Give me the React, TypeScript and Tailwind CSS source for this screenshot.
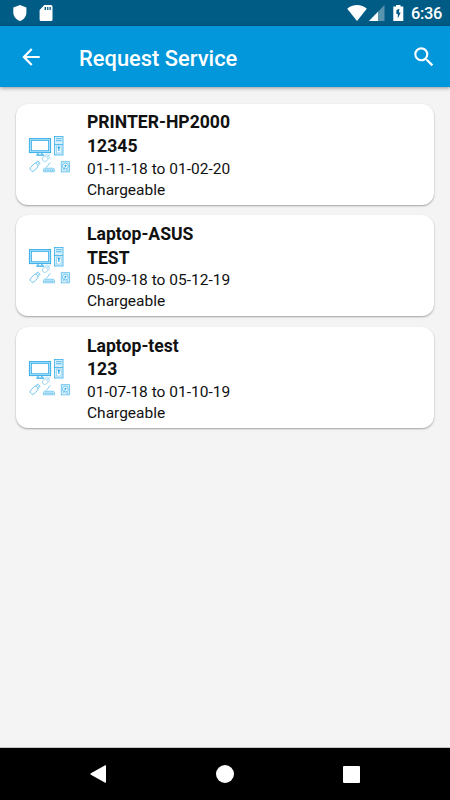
interface Asset {
  name: string;
  serial: string;
  period: string;
  type: string;
}

const assets: Asset[] = [
  { name: 'PRINTER-HP2000', serial: '12345', period: '01-11-18 to 01-02-20', type: 'Chargeable' },
  { name: 'Laptop-ASUS', serial: 'TEST', period: '05-09-18 to 05-12-19', type: 'Chargeable' },
  { name: 'Laptop-test', serial: '123', period: '01-07-18 to 01-10-19', type: 'Chargeable' },
];

function StatusBar() {
  return (
    <div className="flex h-[26px] shrink-0 items-center bg-[#005b85] pl-[13px] pr-[9px] text-white">
      <svg className="h-4 w-[14px]" viewBox="0 0 14 16" fill="currentColor">
        <path d="M7 0 13.4 2.4V7.5C13.4 11.4 10.8 14.7 7 16 3.2 14.7.3 11.4.3 7.5V2.4Z" />
      </svg>
      <svg className="ml-3 h-4 w-[14px]" viewBox="0 0 14 16">
        <path d="M5.3 0H12.2Q13.5 0 13.5 1.5V14.5Q13.5 16 12.2 16H2Q.6 16 .6 14.5V5Z" fill="#fff" />
        <path d="M5.6 2H7V5H5.6ZM8.1 2H9.4V5H8.1ZM10.5 2H11.8V5H10.5Z" fill="#005b85" />
      </svg>
      <div className="ml-auto flex items-center">
        <svg className="h-4 w-5" viewBox="0 0 20 16" fill="currentColor">
          <path d="M.2 3.7C5.8-1.2 14.2-1.2 19.8 3.7L10 16Z" />
        </svg>
        <svg className="ml-[2px] h-4 w-4" viewBox="0 0 16 16" fill="currentColor">
          <path d="M0 16 15.5 0V16Z" opacity=".35" />
          <path d="M0 16 9 6.8V16Z" />
        </svg>
        <svg className="ml-2 h-4 w-[11px]" viewBox="0 0 11 16">
          <path d="M3 0H7.5V1.5H10.3V16H.3V1.5H3Z" fill="#fff" />
          <path d="M6.4 3.8 3.4 5V9H4.8V13.4L7.7 7.6H5.9Z" fill="#005b85" />
        </svg>
        <span className="ml-[7px] w-[30px] whitespace-nowrap pt-[2px] text-[16.4px] font-medium leading-6 tracking-[-0.3px]">6:36</span>
      </div>
    </div>
  );
}

function AppBar() {
  return (
    <header className="z-10 flex h-[61px] shrink-0 items-center bg-[#0296db] pl-[18px] pr-[13.5px] text-white shadow-[0_1px_4px_rgba(0,0,0,0.4)]">
      <svg className="h-[26px] w-[26px]" viewBox="0 0 24 24" fill="currentColor">
        <path d="M20 11H7.83l5.59-5.59L12 4l-8 8 8 8 1.41-1.41L7.83 13H20v-2z" />
      </svg>
      <h1 className="ml-[35px] whitespace-nowrap pt-[5px] text-[21.9px] font-medium">Request Service</h1>
      <svg className="ml-auto h-[26px] w-[26px]" viewBox="0 0 24 24" fill="currentColor">
        <path d="M15.5 14h-.79l-.28-.27A6.471 6.471 0 0 0 16 9.5 6.5 6.5 0 1 0 9.5 16c1.61 0 3.09-.59 4.23-1.57l.27.28v.79l5 4.99L20.49 19l-4.99-5zm-6 0C7.01 14 5 11.99 5 9.5S7.01 5 9.5 5 14 7.01 14 9.5 11.99 14 9.5 14z" />
      </svg>
    </header>
  );
}

// Monitor, tower, mouse, usb stick, router and hard disk
function DevicesIcon() {
  return (
    <svg className="h-[38px] w-[44px] shrink-0" viewBox="0 0 44 38" fill="none" stroke="#36aeea" strokeWidth=".8">
      <rect x="2.4" y="3.6" width="21.2" height="14" fill="#a9dcf6" strokeWidth="1" />
      <rect x="4.4" y="5.5" width="17.2" height="10.2" fill="#fff" />
      <path d="M11 18V19.6M15 18V19.6M9.2 20.1H17" strokeWidth="1.1" />
      <g>
        <rect x="27.5" y="1.5" width="8.5" height="18.5" fill="#d8effb" />
        <path d="M29 3.7H34.7M29 5.7H34.7M27.5 9.5H36" />
        <rect x="29.5" y="11" width="4.6" height="7" fill="#fff" stroke="#8dd0f3" />
        <path d="M31.8 12V16" strokeWidth="1.2" />
        <circle cx="31.8" cy="12.6" r=".8" fill="#168fd0" />
      </g>
      <g stroke="#72c5f0" strokeWidth=".65">
        <rect x="-2.4" y="-3.8" width="4.8" height="7.6" rx="2.4" transform="translate(18.8 23.1) rotate(48)" />
        <path d="m17.9 20.5 3.3 3.4M20 22.2l1.6-1.8q.9-1.2 1.6-1.3" />
      </g>
      <g transform="translate(7.8 31.5) rotate(43)" stroke="#4ab7ec" strokeWidth=".75">
        <rect x="-2.4" y="-3.2" width="4.8" height="8.6" rx="1.7" />
        <path d="M-1.7-3.2V-6H1.7V-3.2M-.8-4.8H.8" />
      </g>
      <g stroke="#4ab7ec">
        <path d="m19.2 32.6 4.1-5.2" strokeWidth=".7" />
        <path d="M17.4 33.2H26.5L27.4 34.3V36.8H16.5V34.3Z" fill="#c2e7f9" strokeWidth=".6" />
        <path d="M17.7 35.3H26.5" strokeDasharray="1.2 .6" />
      </g>
      <g stroke="#4ab7ec">
        <rect x="34.2" y="26.7" width="8.4" height="10.2" fill="#d8effb" strokeWidth=".7" />
        <circle cx="38.4" cy="31" r="2.9" fill="#fff" strokeWidth=".8" />
        <circle cx="38.5" cy="30.8" r=".8" fill="#168fd0" />
        <path d="m38.6 31.2-2.1 3.7M39.2 35.1H41.3" />
      </g>
    </svg>
  );
}

function AssetCard({ asset }: { asset: Asset }) {
  return (
    <div className="flex h-[101px] items-start rounded-[12px] bg-white pl-[11px] shadow-[0_1px_2px_rgba(0,0,0,0.35)]">
      <div className="pt-[31px]">
        <DevicesIcon />
      </div>
      <div className="ml-4 whitespace-nowrap pt-[7.6px] text-[#111]">
        <div className="text-[17.6px] font-bold leading-[23.7px]">{asset.name}</div>
        <div className="text-[17.6px] font-bold leading-[23.7px]">{asset.serial}</div>
        <div className="text-[15.5px] leading-[21px]">{asset.period}</div>
        <div className="text-[15.5px] leading-[21px]">{asset.type}</div>
      </div>
    </div>
  );
}

function NavBar() {
  return (
    <nav className="flex h-[52px] shrink-0 items-center justify-between bg-black pl-[90px] pr-[90px] text-white">
      <svg className="h-[18px] w-4" viewBox="0 0 16 18" fill="currentColor">
        <path d="M15.2.3Q16-.1 16 .8V17.2Q16 18.1 15.2 17.7L.9 9.7Q0 9 .9 8.3Z" />
      </svg>
      <div className="h-[18px] w-[18px] rounded-full bg-white" />
      <div className="h-[17px] w-[17px] rounded-[1px] bg-white" />
    </nav>
  );
}

export default function App() {
  return (
    <div className="flex h-[800px] w-[450px] flex-col overflow-hidden bg-[#f4f4f4] font-['Roboto',sans-serif]">
      <StatusBar />
      <AppBar />
      <main className="flex flex-1 flex-col gap-[10.7px] border-b border-[#c4c4c4] px-4 pt-[16.6px]">
        {assets.map((a) => (
          <AssetCard key={a.name} asset={a} />
        ))}
      </main>
      <NavBar />
    </div>
  );
}
